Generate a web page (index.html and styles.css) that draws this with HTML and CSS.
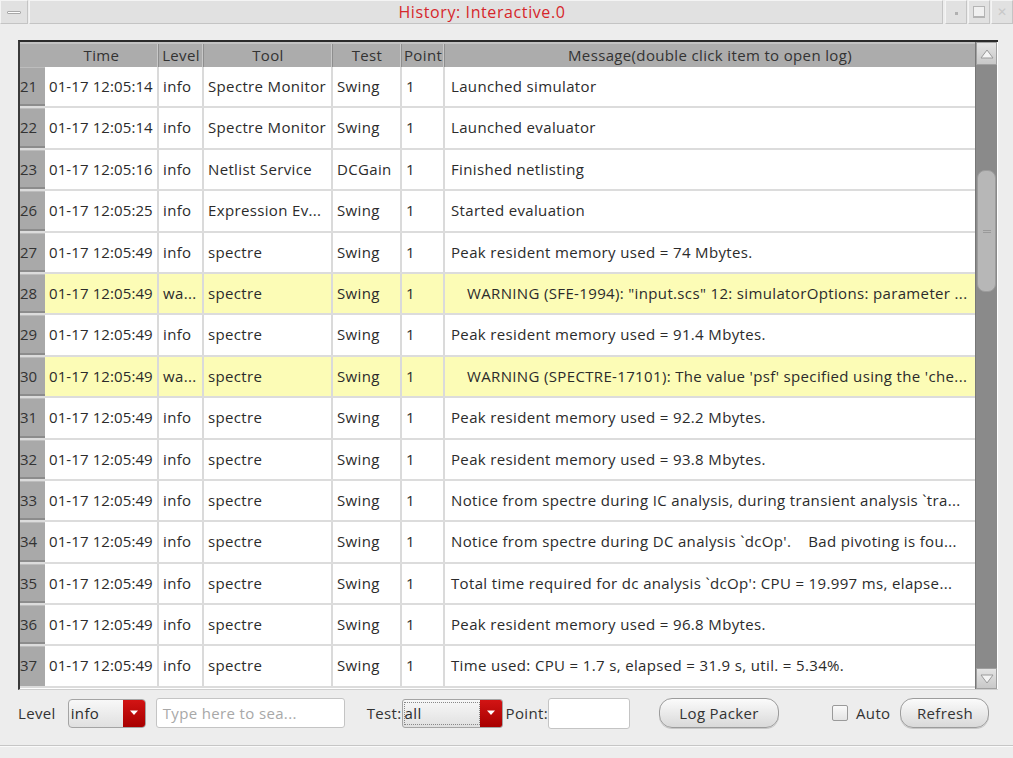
FILE: index.html
```html
<!DOCTYPE html>
<html>
<head>
<meta charset="utf-8">
<link rel="stylesheet" href="styles.css">
</head>
<body>
<div class="window">
  <div class="titlebar">
    <div class="tb-btn tb-menu"><span class="dash"></span></div>
    <div class="tb-title">History: Interactive.0</div>
    <div class="tb-btn tb-min"><span class="dot"></span></div>
    <div class="tb-btn tb-max"><span class="sq"></span></div>
    <div class="tb-btn tb-close"><span class="x">✕</span></div>
  </div>

  <div class="content">
    <div class="tableframe">
      <div class="grid">
        <div class="hdr">
          <div class="c rn"></div>
          <div class="c time">Time</div>
          <div class="c level">Level</div>
          <div class="c tool">Tool</div>
          <div class="c test">Test</div>
          <div class="c point">Point</div>
          <div class="c msg">Message(double click item to open log)</div>
        </div>
        <div class="row"><div class="c rn">21</div><div class="c time">01-17 12:05:14</div><div class="c level">info</div><div class="c tool">Spectre Monitor</div><div class="c test">Swing</div><div class="c point">1</div><div class="c msg">Launched simulator</div></div>
        <div class="row"><div class="c rn">22</div><div class="c time">01-17 12:05:14</div><div class="c level">info</div><div class="c tool">Spectre Monitor</div><div class="c test">Swing</div><div class="c point">1</div><div class="c msg">Launched evaluator</div></div>
        <div class="row"><div class="c rn">23</div><div class="c time">01-17 12:05:16</div><div class="c level">info</div><div class="c tool">Netlist Service</div><div class="c test">DCGain</div><div class="c point">1</div><div class="c msg">Finished netlisting</div></div>
        <div class="row"><div class="c rn">26</div><div class="c time">01-17 12:05:25</div><div class="c level">info</div><div class="c tool">Expression Ev...</div><div class="c test">Swing</div><div class="c point">1</div><div class="c msg">Started evaluation</div></div>
        <div class="row"><div class="c rn">27</div><div class="c time">01-17 12:05:49</div><div class="c level">info</div><div class="c tool">spectre</div><div class="c test">Swing</div><div class="c point">1</div><div class="c msg">Peak resident memory used = 74 Mbytes.</div></div>
        <div class="row warn"><div class="c rn">28</div><div class="c time">01-17 12:05:49</div><div class="c level">wa...</div><div class="c tool">spectre</div><div class="c test">Swing</div><div class="c point">1</div><div class="c msg">WARNING (SFE-1994): "input.scs" 12: simulatorOptions: parameter ...</div></div>
        <div class="row"><div class="c rn">29</div><div class="c time">01-17 12:05:49</div><div class="c level">info</div><div class="c tool">spectre</div><div class="c test">Swing</div><div class="c point">1</div><div class="c msg">Peak resident memory used = 91.4 Mbytes.</div></div>
        <div class="row warn"><div class="c rn">30</div><div class="c time">01-17 12:05:49</div><div class="c level">wa...</div><div class="c tool">spectre</div><div class="c test">Swing</div><div class="c point">1</div><div class="c msg">WARNING (SPECTRE-17101): The value 'psf' specified using the 'che...</div></div>
        <div class="row"><div class="c rn">31</div><div class="c time">01-17 12:05:49</div><div class="c level">info</div><div class="c tool">spectre</div><div class="c test">Swing</div><div class="c point">1</div><div class="c msg">Peak resident memory used = 92.2 Mbytes.</div></div>
        <div class="row"><div class="c rn">32</div><div class="c time">01-17 12:05:49</div><div class="c level">info</div><div class="c tool">spectre</div><div class="c test">Swing</div><div class="c point">1</div><div class="c msg">Peak resident memory used = 93.8 Mbytes.</div></div>
        <div class="row"><div class="c rn">33</div><div class="c time">01-17 12:05:49</div><div class="c level">info</div><div class="c tool">spectre</div><div class="c test">Swing</div><div class="c point">1</div><div class="c msg">Notice from spectre during IC analysis, during transient analysis `tra...</div></div>
        <div class="row"><div class="c rn">34</div><div class="c time">01-17 12:05:49</div><div class="c level">info</div><div class="c tool">spectre</div><div class="c test">Swing</div><div class="c point">1</div><div class="c msg">Notice from spectre during DC analysis `dcOp'.&nbsp;&nbsp;&nbsp; Bad pivoting is fou...</div></div>
        <div class="row"><div class="c rn">35</div><div class="c time">01-17 12:05:49</div><div class="c level">info</div><div class="c tool">spectre</div><div class="c test">Swing</div><div class="c point">1</div><div class="c msg">Total time required for dc analysis `dcOp': CPU = 19.997 ms, elapse...</div></div>
        <div class="row"><div class="c rn">36</div><div class="c time">01-17 12:05:49</div><div class="c level">info</div><div class="c tool">spectre</div><div class="c test">Swing</div><div class="c point">1</div><div class="c msg">Peak resident memory used = 96.8 Mbytes.</div></div>
        <div class="row"><div class="c rn">37</div><div class="c time">01-17 12:05:49</div><div class="c level">info</div><div class="c tool">spectre</div><div class="c test">Swing</div><div class="c point">1</div><div class="c msg">Time used: CPU = 1.7 s, elapsed = 31.9 s, util. = 5.34%.</div></div>
      </div>
      <div class="vscroll">
        <div class="sb-arrow up"><svg width="14" height="10" viewBox="0 0 14 10"><path d="M1 9 L7 1 L13 9 Z" fill="#f4f4f4" stroke="#9a9a9a" stroke-width="1"/></svg></div>
        <div class="sb-track">
          <div class="sb-gap1"></div>
          <div class="sb-thumb"><span class="grip"></span></div>
        </div>
        <div class="sb-arrow down"><svg width="14" height="10" viewBox="0 0 14 10"><path d="M1 1 L7 9 L13 1 Z" fill="#f4f4f4" stroke="#9a9a9a" stroke-width="1"/></svg></div>
      </div>
    </div>

    <div class="toolbar">
      <span class="lbl">Level</span>
      <div class="combo combo-level"><span class="cv">info</span><span class="cbtn"><svg width="10" height="6" viewBox="0 0 10 6"><path d="M1 0.5 L5 5 L9 0.5 Z" fill="#fff"/></svg></span></div>
      <div class="search">Type here to sea...</div>
      <span class="lbl lbl-test">Test:</span>
      <div class="combo combo-test"><span class="cv dotted">all</span><span class="cbtn"><svg width="10" height="6" viewBox="0 0 10 6"><path d="M1 0.5 L5 5 L9 0.5 Z" fill="#fff"/></svg></span></div>
      <span class="lbl lbl-point">Point:</span>
      <div class="pointbox"></div>
      <div class="btn btn-log">Log Packer</div>
      <div class="check"></div>
      <span class="lbl lbl-auto">Auto</span>
      <div class="btn btn-refresh">Refresh</div>
    </div>
  </div>
  <div class="bottomline"></div>
</div>
</body>
</html>
```
FILE: styles.css
```css
* { box-sizing: border-box; }
html, body { margin: 0; padding: 0; }
body {
  width: 1013px;
  height: 758px;
  background: #ededed;
  font-family: "Open Sans", "Noto Sans", sans-serif;
  font-size: 15px;
  letter-spacing: 0.35px;
  color: #2b2b2b;
  overflow: hidden;
}
.window { display: flex; flex-direction: column; height: 758px; }

/* title bar */
.titlebar {
  height: 25px;
  display: flex;
  background: #ededed;
}
.tb-btn {
  height: 24px;
  background: #e1e1e1;
  border: 1px solid #c4c4c4;
  border-top-color: #f4f4f4;
  border-left-color: #f4f4f4;
  display: flex;
  align-items: center;
  justify-content: center;
}
.tb-menu { width: 28px; }
.dash { width: 14px; height: 3px; background: #fff; border: 1px solid #a8a8a8; border-radius: 1px; }
.tb-title {
  flex: 1;
  height: 24px;
  margin-left: 1px;
  background: #e1e1e1;
  border: 1px solid #c4c4c4;
  border-top-color: #f4f4f4;
  border-left-color: #f4f4f4;
  color: #d6262b;
  text-align: center;
  font-size: 16px;
  letter-spacing: 0.6px;
  line-height: 22px;
  padding-right: 8px;
}
.tb-min { width: 22px; margin-left: 2px; }
.dot { width: 3px; height: 3px; background: #b0b0b0; margin-top: 3px; }
.tb-max { width: 22px; margin-left: 1px; }
.sq { width: 12px; height: 12px; border: 1px solid #b4b4b4; border-bottom-width: 2px; background: #f0f0f0; }
.tb-close { width: 22px; margin-left: 1px; }
.x { color: #c8c8c8; font-size: 12px; line-height: 1; }

/* content */
.content { padding: 15px 16px 0 18px; }
.tableframe {
  width: 980px;
  height: 650px;
  display: flex;
  border-top: 2px solid #2a2a2a;
  border-left: 2px solid #3a3a3a;
  border-bottom: 1px solid #cfcfcf;
  background: #ffffff;
}
.grid { width: 955px; display: flex; flex-direction: column; overflow: hidden; }
.hdr {
  height: 25px;
  display: flex;
  background: #acacac;
  border-top: 2px solid #c2c2c2;
}
.hdr .c {
  text-align: center;
  color: #333;
  line-height: 22px;
  border-right: 1px solid #8e8e8e;
  box-shadow: inset -1px 0 0 #c8c8c8;
  padding: 0 2px;
}
.hdr .rn { border-right: none; box-shadow: none; }
.hdr .msg { border-right: none; box-shadow: none; }
.row {
  height: 41.4px;
  display: flex;
  background: #ffffff;
  border-bottom: 2px solid #dcdcdc;
}
.row.warn { background: #fcfcb6; }
.c {
  white-space: nowrap;
  overflow: hidden;
  padding: 0 4px;
}
.row .c {
  line-height: 39px;
  border-right: 2px solid #dadada;
}
.row .msg { border-right: none; padding-left: 6px; }
.row.warn .msg { padding-left: 22px; }
.rn { width: 25px; padding: 0 0 0 1px; }
.row .rn {
  background: #a9a9a9;
  border-right: none;
  color: #333;
  letter-spacing: 0;
  padding-left: 0;
  box-shadow: inset 0 -2px 0 #8c8c8c, inset 0 1px 0 #bdbdbd;
}
.row:last-child .rn { box-shadow: inset 0 1px 0 #bdbdbd; }
.time { width: 114px; }
.row .time { letter-spacing: 0.1px; }
.level { width: 45px; }
.tool { width: 129px; }
.test { width: 69px; }
.point { width: 43px; }
.msg { flex: 1; }

/* scrollbar */
.vscroll {
  width: 22px;
  display: flex;
  flex-direction: column;
  background: #8a8a8a;
  border-left: 1px solid #777;
}
.sb-arrow {
  height: 23px;
  background: linear-gradient(#e4e4e4, #c8c8c8);
  border: 1px solid #a0a0a0;
  display: flex;
  align-items: center;
  justify-content: center;
}
.sb-arrow.down { height: 21px; margin-top: auto; }
.sb-track { flex: 1; display: flex; flex-direction: column; }
.sb-gap1 { height: 105px; }
.sb-thumb {
  height: 122px;
  margin: 0 1px;
  background: #b7b7b7;
  border: 1px solid #9c9c9c;
  border-radius: 8px;
  display: flex;
  align-items: center;
  justify-content: center;
}
.grip { width: 8px; height: 3px; border-top: 1px solid #9a9a9a; border-bottom: 1px solid #9a9a9a; }

/* toolbar */
.toolbar {
  height: 44px;
  display: flex;
  align-items: center;
  padding-top: 2px;
}
.lbl { color: #333; }
.combo {
  height: 29px;
  display: flex;
  border: 1px solid #a4a4a4;
  border-radius: 4px;
  background: linear-gradient(#f8f8f8, #e0e0e0);
  overflow: hidden;
}
.combo-level { width: 78px; margin-left: 12px; }
.cv { flex: 1; line-height: 27px; padding-left: 2px; }
.cbtn {
  width: 22px;
  background: linear-gradient(#d21414, #a80000);
  display: flex;
  align-items: center;
  justify-content: center;
}
.search {
  width: 189px;
  height: 30px;
  margin-left: 10px;
  background: #fff;
  border: 1px solid #c4c4c4;
  border-radius: 3px;
  color: #a8a8a8;
  line-height: 28px;
  padding-left: 6px;
}
.lbl-test { margin-left: 22px; }
.combo-test { width: 101px; margin-left: 0; border-radius: 3px; }
.cv.dotted { border: 1px dotted #888; margin: 2px 0 2px 1px; line-height: 21px; padding-left: 0; }
.lbl-point { margin-left: 3px; }
.pointbox {
  width: 82px;
  height: 31px;
  background: #fff;
  border: 1px solid #c4c4c4;
  border-radius: 3px;
}
.btn {
  height: 30px;
  border: 1px solid #9c9c9c;
  border-radius: 13px;
  background: linear-gradient(#fbfbfb, #d9d9d9);
  text-align: center;
  line-height: 28px;
  color: #333;
  font-size: 15px;
  box-shadow: 0 1px 0 #c8c8c8;
}
.btn-log { width: 120px; margin-left: 29px; }
.check {
  width: 16px;
  height: 16px;
  margin-left: 53px;
  background: linear-gradient(#fafafa, #e4e4e4);
  border: 1px solid #9a9a9a;
  border-radius: 2px;
}
.lbl-auto { margin-left: 8px; }
.btn-refresh { width: 89px; margin-left: 10px; }

.bottomline {
  height: 2px;
  margin: 11px 0 0 0;
  background: #c6c6c6;
  border-bottom: 1px solid #fafafa;
}
```
